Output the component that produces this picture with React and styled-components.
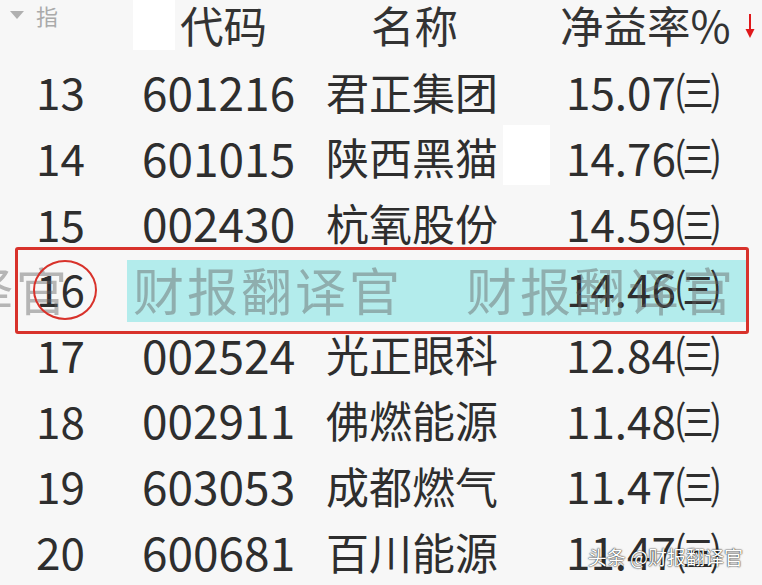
import React from "react";
import styled, { createGlobalStyle } from "styled-components";

const Global = createGlobalStyle`
  html, body { margin: 0; padding: 0; }
  body {
    background: #f7f7f7;
    font-family: "Noto Sans CJK SC", "Noto Sans", sans-serif;
    width: 762px;
    height: 585px;
    overflow: hidden;
  }
`;

const Page = styled.div`
  position: relative;
  width: 762px;
  height: 585px;
  overflow: hidden;
  background: #f7f7f7;
`;

const cols = "130px 190px 235px 207px";

const HeaderRow = styled.div`
  display: grid;
  grid-template-columns: ${cols};
  height: 62px;
  align-items: start;
`;

const HeaderCell = styled.div`
  padding-left: ${(p) => p.$pl}px;
  font-size: 43.5px;
  line-height: 1.1;
  color: #333;
  padding-top: 1px;
  display: flex;
  align-items: center;
  gap: 4px;
`;

const IndexHead = styled.div`
  display: flex;
  align-items: center;
  gap: 12px;
  padding-left: 10px;
  padding-top: 4px;
  color: #aaa;
  font-size: 22px;
  line-height: 1;
`;

const Tri = styled.span`
  width: 0;
  height: 0;
  border-left: 7px solid transparent;
  border-right: 7px solid transparent;
  border-top: 8px solid #b0b0b0;
`;

const SortArrow = styled.svg`
  margin-left: 10px;
  margin-top: 2px;
`;

const Row = styled.div`
  position: relative;
  display: grid;
  grid-template-columns: ${cols};
  height: 65.7px;
  align-items: center;
`;

const Cell = styled.div`
  grid-row: 1;
  position: relative;
  z-index: 1;
  padding-left: ${(p) => p.$pl}px;
  padding-bottom: 7px;
  font-size: ${(p) => p.$fs || 43}px;
  line-height: 1.1;
  color: #2e2e2e;
  white-space: nowrap;
`;

const Highlight = styled.div`
  grid-row: 1;
  grid-column: 2 / -1;
  align-self: stretch;
  margin: 1px 15px 3px -3px;
  background: #b3ecec;
`;

const Watermark = styled.div`
  position: absolute;
  left: -200px;
  top: 5px;
  z-index: 2;
  display: flex;
  gap: 63px;
  color: rgba(100, 100, 100, 0.45);
  font-size: 51px;
  line-height: 1;
  letter-spacing: 3px;
  white-space: nowrap;
  pointer-events: none;
`;

const Frame = styled.div`
  position: absolute;
  left: 15px;
  right: 13px;
  top: -12px;
  bottom: -9px;
  border: 3px solid #d8322b;
  border-radius: 3px;
  z-index: 3;
`;

const Circle = styled.div`
  position: absolute;
  left: 33px;
  top: 1px;
  width: 60px;
  height: 56px;
  border: 2px solid #d8322b;
  border-radius: 50%;
  z-index: 3;
`;

const Patch = styled.div`
  position: absolute;
  background: #ffffff;
  z-index: 0;
`;

const Credit = styled.div`
  position: absolute;
  right: 19px;
  bottom: 19px;
  z-index: 4;
  color: #ffffff;
  font-size: 19px;
  line-height: 1;
  text-shadow: 0 0 2px rgba(0, 0, 0, 0.75), 0 0 1px rgba(0, 0, 0, 0.9);
`;

const rows = [
  ["13", "601216", "君正集团", "15.07"],
  ["14", "601015", "陕西黑猫", "14.76"],
  ["15", "002430", "杭氧股份", "14.59"],
  ["16", "", "", "14.46", true],
  ["17", "002524", "光正眼科", "12.84"],
  ["18", "002911", "佛燃能源", "11.48"],
  ["19", "603053", "成都燃气", "11.47"],
  ["20", "600681", "百川能源", "11.47"],
];

export default function App() {
  return (
    <>
      <Global />
      <Page>
        <Patch style={{ left: 133, top: 0, width: 42, height: 50 }} />
        <Patch style={{ left: 503, top: 125, width: 47, height: 60 }} />
        <HeaderRow>
          <IndexHead>
            <Tri />
            <span>指</span>
          </IndexHead>
          <HeaderCell $pl={50}>代码</HeaderCell>
          <HeaderCell $pl={51}>名称</HeaderCell>
          <HeaderCell $pl={5}>
            净益率%
            <SortArrow width="10" height="28" viewBox="0 0 10 28">
              <line x1="5" y1="2" x2="5" y2="20" stroke="#e0181b" strokeWidth="2" />
              <path d="M0.5 17 L9.5 17 L5 26 Z" fill="#e0181b" />
            </SortArrow>
          </HeaderCell>
        </HeaderRow>
        {rows.map(([n, code, name, val, hl]) => (
          <Row key={n}>
            {hl && <Highlight />}
            <Cell $pl={36} $fs={44} style={{ gridColumn: 1 }}>
              {n}
            </Cell>
            <Cell $pl={12} $fs={46} style={{ gridColumn: 2 }}>
              {code}
            </Cell>
            <Cell $pl={6} style={{ gridColumn: 3 }}>
              {name}
            </Cell>
            <Cell $pl={11} $fs={44} style={{ gridColumn: 4 }}>
              {val}㈢
            </Cell>
            {hl && (
              <>
                <Watermark>
                  <span>财报翻译官</span>
                  <span>财报翻译官</span>
                  <span>财报翻译官</span>
                </Watermark>
                <Circle />
                <Frame />
              </>
            )}
          </Row>
        ))}
        <Credit>头条 @财报翻译官</Credit>
      </Page>
    </>
  );
}
